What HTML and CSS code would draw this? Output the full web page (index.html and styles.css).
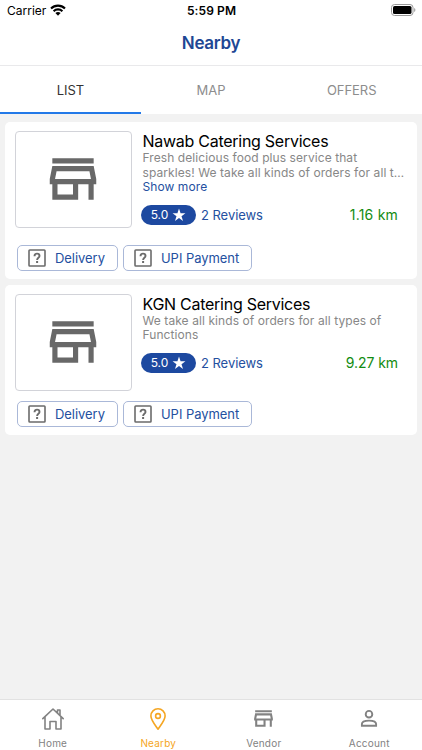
FILE: index.html
```html
<!DOCTYPE html>
<html lang="en">
<head>
<meta charset="utf-8">
<title>Nearby</title>
<link rel="stylesheet" href="styles.css">
</head>
<body>
<svg class="defs" width="0" height="0" aria-hidden="true">
  <symbol id="store" viewBox="0 0 24 24"><path fill="currentColor" d="M18.36 9l.6 3H5.04l.6-3h12.72M20 4H4v2h16V4zm0 3H4l-1 5v2h1v6h10v-6h4v6h2v-6h1v-2l-1-5zM6 18v-4h6v4H6z"/></symbol>
  <symbol id="star" viewBox="0 0 24 24"><path fill="currentColor" d="M12 1l2.7 8.1H23l-6.700 5 2.600 8.200L12 17.300l-6.900 5 2.600-8.200L1 9.100h8.300z"/></symbol>
  <symbol id="unknown" viewBox="0 0 18 18"><rect x="1" y="1" width="16" height="16" rx=".8" fill="none" stroke="#6b6b6b" stroke-width="1.600"/><path d="M6.500 7.200C6.500 3.700 11.500 4 11.500 6.900c0 1.800-2.400 1.900-2.400 4" fill="none" stroke="#6b6b6b" stroke-width="1.900"/><rect x="8.100" y="12" width="2" height="2" fill="#6b6b6b"/></symbol>
</svg>
<div class="app">
  <div class="status">
    <div class="carrier"><span>Carrier</span>
      <svg width="16" height="12" viewBox="0 0 16 12"><g fill="none" stroke="#000" stroke-width="2.100"><path d="M1 4.500a10 10 0 0 1 14 0"/><path d="M3.600 7.200a6.300 6.300 0 0 1 8.800 0"/></g><path d="M5.400 9.100a3.800 3.800 0 0 1 5.200 0L8 11.700z"/></svg>
    </div>
    <div class="time">5:59 PM</div>
    <svg class="battery" width="25" height="12" viewBox="0 0 25 12"><rect x=".5" y=".5" width="21.500" height="11" rx="3" fill="none" stroke="#999"/><rect x="2" y="2" width="18.500" height="8" rx="1.600"/><path d="M23.200 4v4c1.600-.6 1.600-3.400 0-4z" fill="#999"/></svg>
  </div>
  <header class="header"><h1>Nearby</h1></header>
  <nav class="tabs"><div class="tab active">LIST</div><div class="tab">MAP</div><div class="tab">OFFERS</div></nav>
  <main class="list">
    <article class="card">
      <div class="row">
        <div class="thumb"><svg width="62" height="62"><use href="#store"/></svg></div>
        <div class="info">
          <h2>Nawab Catering Services</h2>
          <p>Fresh delicious food plus service that<br>sparkles! We take all kinds of orders for all t…</p>
          <div class="more">Show more</div>
          <div class="meta"><span class="pill">5.0<svg width="14" height="14"><use href="#star"/></svg></span><span class="reviews">2 Reviews</span><span class="distance near">1.16 km</span></div>
        </div>
      </div>
      <div class="chips"><div class="chip"><svg width="18" height="18"><use href="#unknown"/></svg><span>Delivery</span></div><div class="chip upi"><svg width="18" height="18"><use href="#unknown"/></svg><span>UPI Payment</span></div></div>
    </article>
    <article class="card">
      <div class="row">
        <div class="thumb"><svg width="62" height="62"><use href="#store"/></svg></div>
        <div class="info">
          <h2>KGN Catering Services</h2>
          <p>We take all kinds of orders for all types of<br>Functions</p>
          <div class="meta"><span class="pill">5.0<svg width="14" height="14"><use href="#star"/></svg></span><span class="reviews">2 Reviews</span><span class="distance">9.27 km</span></div>
        </div>
      </div>
      <div class="chips"><div class="chip"><svg width="18" height="18"><use href="#unknown"/></svg><span>Delivery</span></div><div class="chip upi"><svg width="18" height="18"><use href="#unknown"/></svg><span>UPI Payment</span></div></div>
    </article>
  </main>
  <footer class="bottom">
    <div class="item"><svg width="24" height="24" viewBox="0 0 24 24" fill="none" stroke="currentColor" stroke-width="1.600" stroke-linejoin="round" stroke-linecap="round"><path d="M1.800 11.700L12 2l10.200 9.700M4 10v12h5v-7.500h6V22h5V10M16.500 6V3h2.500v5.500"/></svg><span>Home</span></div>
    <div class="item on"><svg width="24" height="24" viewBox="0 0 24 24" fill="none" stroke="currentColor" stroke-width="1.600" stroke-linejoin="round"><path d="M12 22.200C9 17.800 4.900 12.800 4.900 8.900a7.100 7.100 0 0 1 14.200 0c0 3.900-4.100 8.900-7.100 13.300z"/><circle cx="12" cy="9" r="2.400"/></svg><span>Nearby</span></div>
    <div class="item"><svg class="big" width="25" height="25"><use href="#store"/></svg><span>Vendor</span></div>
    <div class="item"><svg width="24" height="24" viewBox="0 0 24 24" fill="none" stroke="currentColor" stroke-width="1.900"><circle cx="12" cy="7.200" r="3.300"/><path d="M4.900 18.800v-1.700c0-4.700 14.200-4.700 14.200 0v1.700z"/></svg><span>Account</span></div>
  </footer>
</div>
</body>
</html>
```
FILE: styles.css
```css
* { box-sizing: border-box; }
body { margin: 0; font-family: Inter, "Liberation Sans", sans-serif; background: #f2f2f2; }
h1, h2, p { margin: 0; font-weight: 400; }
svg { display: block; flex: none; }
.defs { position: absolute; }
.app { width: 422px; height: 750px; display: flex; flex-direction: column; overflow: hidden; white-space: nowrap; }
.status { height: 22px; background: #fff; display: grid; grid-template-columns: 1fr auto 1fr; align-items: center; padding: 0 6px 1px 7px; font-size: 12px; }
.carrier { display: flex; align-items: center; gap: 4px; }
.carrier svg { margin-top: -1px; }
.time { font-weight: 600; letter-spacing: .1px; }
.battery { justify-self: end; margin-top: -1px; }
.header { height: 44px; background: #fff; border-bottom: 1px solid #e9e9eb; display: flex; align-items: center; justify-content: center; padding-bottom: 1px; }
h1 { font-size: 17px; font-weight: 600; color: #1e4794; letter-spacing: -.3px; }
.tabs { height: 48px; background: #fff; display: grid; grid-template-columns: repeat(3, 1fr); }
.tab { display: flex; align-items: center; justify-content: center; font-size: 13px; color: #8d8d8d; border-bottom: 2px solid transparent; padding-top: 2px; letter-spacing: -.05px; }
.active { color: #333; border-color: #2279e8; }
.list { flex: 1; padding: 8px 5px; display: flex; flex-direction: column; gap: 6px; }
.card { background: #fff; border-radius: 5px; padding: 9px 10px 8px; }
.row { display: flex; gap: 10px; }
.thumb { flex: none; width: 117px; height: 97px; border: 1px solid #d2d3d9; border-radius: 4px; display: flex; align-items: center; justify-content: center; color: #686868; padding: 0 1px 1px 0; }
.info { flex: 1; min-width: 0; padding-bottom: 9px; }
h2 { font-size: 16px; line-height: 20px; color: #000; letter-spacing: -.27px; padding-left: .5px; }
p { font-size: 12px; line-height: 14.5px; color: #878787; letter-spacing: .08px; padding-left: .5px; }
.more { font-size: 12px; line-height: 14.5px; color: #2450a0; letter-spacing: .08px; padding-left: .5px; }
.meta { display: flex; align-items: center; height: 21px; margin: 10px 9px 0 -1px; }
.pill { width: 55px; height: 20px; border-radius: 10px; background: #1d49a0; color: #fff; font-size: 12px; display: flex; align-items: center; justify-content: center; gap: 4px; }
.reviews { margin-left: 5px; font-size: 13px; color: #2450a0; letter-spacing: -.05px; }
.distance { margin-left: auto; font-size: 14px; color: #128c12; letter-spacing: -.05px; }
.near { letter-spacing: .2px; }
.meta > span { margin-top: -1px; }
.chips { display: flex; gap: 5px; padding: 10px 2px 0; }
.chip { width: 101px; height: 26px; border: 1px solid #aab8d8; border-radius: 5px; display: flex; align-items: center; gap: 10px; padding-left: 9px; font-size: 13px; color: #2450a0; letter-spacing: -.05px; }
.chip svg { margin-left: .5px; margin-right: -.5px; }
.upi { width: 129px; }
.bottom { height: 51px; background: #fff; border-top: 1px solid #e2e2e2; display: grid; grid-template-columns: repeat(4, 1fr); }
.item { display: flex; flex-direction: column; align-items: center; padding-top: 7px; font-size: 10px; line-height: 12px; letter-spacing: .2px; color: #828282; gap: 6px; }
.big { margin: -1px 0 0; }
.on { color: #f5a623; }
```
